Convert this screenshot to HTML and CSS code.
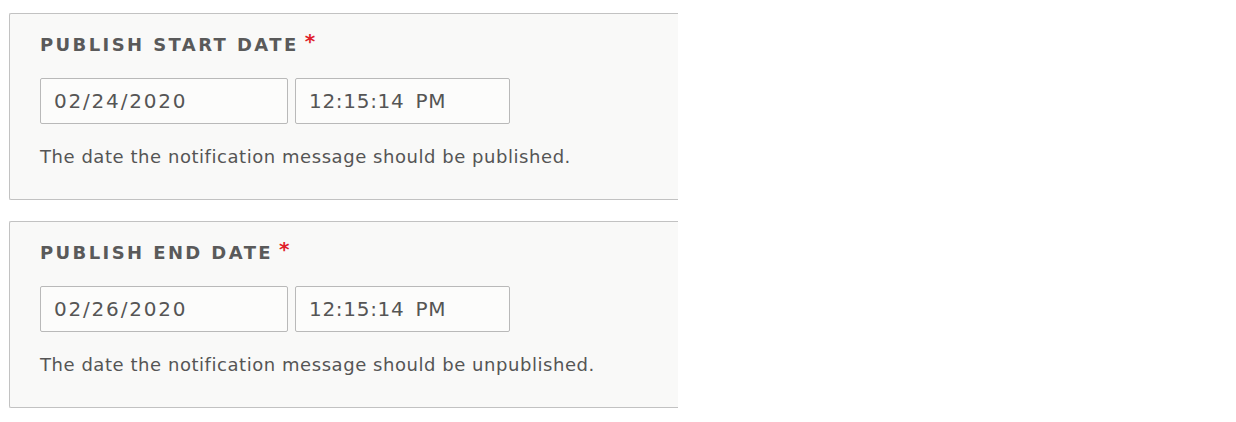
FILE: index.html
```html
<!DOCTYPE html>
<html>
<head>
<meta charset="utf-8">
<link rel="stylesheet" href="styles.css">
</head>
<body>
<div class="page">
  <div class="panel">
    <div class="label">PUBLISH START DATE<span class="req">*</span></div>
    <div class="inputs">
      <div class="field date">02/24/2020</div>
      <div class="field time">12:15:14 PM</div>
    </div>
    <div class="desc">The date the notification message should be published.</div>
  </div>
  <div class="panel">
    <div class="label">PUBLISH END DATE<span class="req">*</span></div>
    <div class="inputs">
      <div class="field date">02/26/2020</div>
      <div class="field time">12:15:14 PM</div>
    </div>
    <div class="desc">The date the notification message should be unpublished.</div>
  </div>
</div>
</body>
</html>
```
FILE: styles.css
```css
html, body {
  margin: 0;
  padding: 0;
  background: #ffffff;
}
.page {
  padding: 13px 0 0 9px;
  display: flex;
  flex-direction: column;
  gap: 21px;
  font-family: "DejaVu Sans", "Liberation Sans", sans-serif;
  color: #555;
}
.panel {
  width: 669px;
  box-sizing: border-box;
  border: 1px solid #c2c2c2;
  border-right: none;
  border-radius: 2px 0 0 2px;
  background: #f9f9f8;
  padding: 20px 0 0 30px;
  height: 187px;
}
.label {
  font-weight: bold;
  font-size: 18px;
  letter-spacing: 2.4px;
  color: #5a5a5a;
  height: 22px;
  line-height: 22px;
}
.req {
  color: #e0202a;
  margin-left: 6px;
  font-size: 20px;
  letter-spacing: 0;
  line-height: 10px;
  vertical-align: 3px;
}
.inputs {
  display: flex;
  gap: 7px;
  margin-top: 22px;
}
.field {
  box-sizing: border-box;
  height: 46px;
  border: 1px solid #b9b9b9;
  border-radius: 2px;
  background: #fcfcfb;
  font-size: 20px;
  line-height: 44px;
  padding-left: 13px;
  color: #555;
}
.date { width: 248px; letter-spacing: 1.8px; }
.time { width: 215px; letter-spacing: 0.7px; word-spacing: 4px; }
.desc {
  margin-top: 22px;
  font-size: 18px;
  letter-spacing: 0.55px;
  color: #555;
  line-height: 22px;
}
```
